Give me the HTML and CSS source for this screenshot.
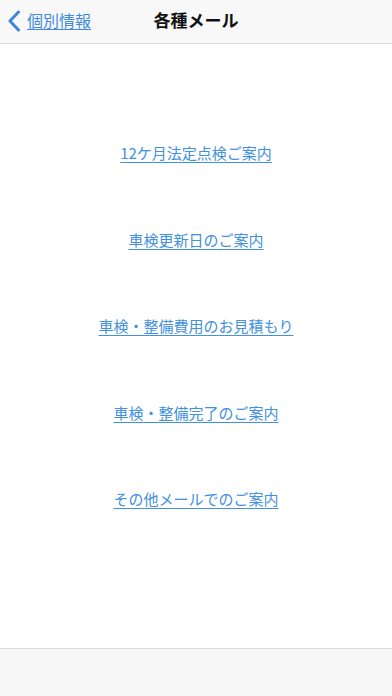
FILE: index.html
```html
<!DOCTYPE html>
<html lang="ja">
<head>
<meta charset="utf-8">
<link rel="stylesheet" href="styles.css">
</head>
<body>
<div class="screen">
  <header class="navbar">
    <a class="back" href="#">
      <svg class="chevron" width="14" height="22" viewBox="0 0 14 22"><path d="M11.5 2 L3 11 L11.5 20" fill="none" stroke="#3d86dc" stroke-width="3" stroke-linecap="round" stroke-linejoin="round"/></svg>
      <span class="back-label">個別情報</span>
    </a>
    <h1 class="title">各種メール</h1>
  </header>
  <main class="content">
    <a class="mail-link" href="#">12ケ月法定点検ご案内</a>
    <a class="mail-link" href="#">車検更新日のご案内</a>
    <a class="mail-link" href="#">車検・整備費用のお見積もり</a>
    <a class="mail-link" href="#">車検・整備完了のご案内</a>
    <a class="mail-link" href="#">その他メールでのご案内</a>
  </main>
  <footer class="toolbar"></footer>
</div>
</body>
</html>
```

FILE: styles.css
```css
* { box-sizing: border-box; }
html, body { margin: 0; padding: 0; background: #fff; }
body { font-family: "Noto Sans CJK JP", "Noto Sans", sans-serif; }
.screen { width: 392px; height: 696px; display: flex; flex-direction: column; }
.navbar {
  height: 44px;
  background: #f8f8f8;
  border-bottom: 1px solid #d9d9d9;
  position: relative;
  display: flex;
  align-items: center;
  justify-content: center;
  flex-shrink: 0;
}
.back {
  position: absolute;
  left: 7px;
  top: 0;
  height: 43px;
  display: flex;
  align-items: center;
  gap: 6px;
  color: #3f8ae0;
  text-decoration: none;
}
.chevron { display: block; margin-top: -2px; }
.back-label {
  font-size: 16px;
  line-height: 20px;
  text-decoration: underline;
  text-underline-offset: 2px;
  text-decoration-thickness: 1px;
  margin-top: -3px;
}
.title {
  margin: -4px 0 0 0;
  font-size: 17px;
  font-weight: 700;
  color: #111;
  line-height: 20px;
}
.content {
  flex: 1;
  display: flex;
  flex-direction: column;
  align-items: center;
  padding-top: 99px;
  gap: 66.5px;
}
.mail-link {
  font-size: 15px;
  line-height: 20px;
  color: #4290e0;
  text-decoration: underline;
  text-underline-offset: 3px;
  text-decoration-thickness: 1px;
}
.toolbar {
  height: 48px;
  flex-shrink: 0;
  background: #f7f7f8;
  border-top: 1px solid #d8d8d8;
}
```
